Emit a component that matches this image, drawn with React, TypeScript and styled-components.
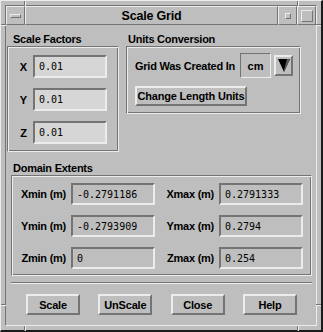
import React from "react";
import styled, { createGlobalStyle, css } from "styled-components";

const BG = "#bebebe";
const LIGHT = "#ececec";
const DARK = "#747474";
const FIELD = "#d6d6d6";

const GlobalStyle = createGlobalStyle`
  html, body {
    margin: 0;
    padding: 0;
    background: ${BG};
  }
  * {
    box-sizing: border-box;
  }
`;

const raised = css`
  border-style: solid;
  border-color: ${LIGHT} ${DARK} ${DARK} ${LIGHT};
`;

const sunken = css`
  border-style: solid;
  border-color: ${DARK} ${LIGHT} ${LIGHT} ${DARK};
`;

const etched = css`
  border: 1px solid;
  border-color: ${DARK} ${LIGHT} ${LIGHT} ${DARK};
  box-shadow: inset 1px 1px 0 ${LIGHT}, inset -1px -1px 0 ${DARK};
`;

const Window = styled.div`
  position: relative;
  width: 323px;
  height: 332px;
  background: ${BG};
  border-style: solid;
  border-width: 1px 2px 2px 1px;
  border-color: ${LIGHT} #1a1a1a #1a1a1a ${LIGHT};
  padding: 4px;
  font-family: "Liberation Sans", Arial, sans-serif;
  color: #000;
`;

const Inner = styled.div`
  display: flex;
  flex-direction: column;
  width: 100%;
  height: 100%;
  border: 1px solid;
  border-color: ${DARK} ${LIGHT} ${LIGHT} ${DARK};
`;

// resize-handle marks cut into the window frame
const Notch = styled.div<{ $x: number; $y: number; $w: number; $h: number }>`
  position: absolute;
  left: ${({ $x }) => $x}px;
  top: ${({ $y }) => $y}px;
  width: ${({ $w }) => $w}px;
  height: ${({ $h }) => $h}px;
  background: ${DARK};
  box-shadow: ${({ $w }) => ($w === 1 ? `1px 0 0 ${LIGHT}` : `0 1px 0 ${LIGHT}`)};
`;

const TitleBar = styled.div`
  display: flex;
  height: 19px;
  flex: none;
`;

const TitleButton = styled.div<{ $w: number }>`
  ${raised};
  border-width: 1px;
  width: ${({ $w }) => $w}px;
  flex: none;
  display: flex;
  align-items: center;
  justify-content: center;
`;

const Title = styled.div`
  ${raised};
  border-width: 1px;
  flex: 1;
  display: flex;
  align-items: center;
  justify-content: center;
  font-weight: bold;
  font-size: 12.5px;
  letter-spacing: -0.2px;
`;

const TitleGlyph = styled.div<{ $w: number; $h: number }>`
  ${raised};
  border-width: 1px;
  width: ${({ $w }) => $w}px;
  height: ${({ $h }) => $h}px;
`;

const Content = styled.div`
  flex: 1;
  display: flex;
  flex-direction: column;
  padding-top: 7px;
`;

const TopRow = styled.div`
  display: flex;
  align-items: flex-start;
  gap: 7px;
  padding-left: 1px;
`;

const Group = styled.div<{ $w: number; $ml?: number; $mt?: number }>`
  width: ${({ $w }) => $w}px;
  margin-left: ${({ $ml }) => $ml ?? 0}px;
  margin-top: ${({ $mt }) => $mt ?? 0}px;
  flex: none;
`;

const GroupLabel = styled.div<{ $pl: number }>`
  height: 14px;
  line-height: 14px;
  padding-left: ${({ $pl }) => $pl}px;
  font-weight: bold;
  font-size: 11px;
  letter-spacing: -0.25px;
  white-space: nowrap;
`;

const Frame = styled.div<{ $h: number }>`
  ${etched};
  height: ${({ $h }) => $h}px;
`;

const FactorList = styled.div`
  display: flex;
  flex-direction: column;
  gap: 10px;
  padding: 8px 0 0 6px;
`;

const FactorRow = styled.div`
  display: flex;
  align-items: center;
`;

const AxisLabel = styled.span`
  width: 19px;
  text-align: center;
  font-weight: bold;
  font-size: 11px;
`;

const Field = styled.div<{ $w: number; $h: number; $bg?: string }>`
  ${sunken};
  border-width: 2px;
  width: ${({ $w }) => $w}px;
  height: ${({ $h }) => $h}px;
  background: ${({ $bg }) => $bg ?? BG};
  padding-left: 4px;
  display: flex;
  align-items: center;
  font-family: "DejaVu Sans Mono", "Liberation Mono", monospace;
  font-size: 10px;
  white-space: nowrap;
`;

const UnitsBody = styled.div`
  display: flex;
  flex-direction: column;
  align-items: flex-start;
  gap: 8px;
  padding: 6px 0 0 8px;
`;

const UnitsRow = styled.div`
  display: flex;
  align-items: center;
`;

const UnitsText = styled.span`
  width: 105px;
  font-weight: bold;
  font-size: 11px;
  letter-spacing: -0.25px;
  white-space: nowrap;
`;

const UnitBox = styled.div`
  ${sunken};
  border-width: 1px;
  width: 31px;
  height: 25px;
  display: flex;
  align-items: center;
  justify-content: center;
  font-weight: bold;
  font-size: 11px;
`;

const ArrowButton = styled.div`
  ${raised};
  border-width: 2px;
  width: 19px;
  height: 21px;
  margin-left: 3px;
  display: flex;
  align-items: center;
  justify-content: center;
`;

const PushButton = styled.div<{ $w: number; $h: number }>`
  ${raised};
  border-width: 2px;
  width: ${({ $w }) => $w}px;
  height: ${({ $h }) => $h}px;
  display: flex;
  align-items: center;
  justify-content: center;
  font-weight: bold;
  font-size: 11px;
  letter-spacing: -0.2px;
  white-space: nowrap;
`;

const ExtentsGrid = styled.div`
  display: grid;
  grid-template-columns: 59px 84px 64px 84px;
  row-gap: 10px;
  align-items: center;
  padding-top: 7px;
`;

const ExtentLabel = styled.span`
  text-align: right;
  padding-right: 5px;
  font-weight: bold;
  font-size: 11px;
  letter-spacing: -0.25px;
  white-space: nowrap;
`;

const Separator = styled.div`
  margin: 6px 4px 0 5px;
  height: 2px;
  border-top: 1px solid ${DARK};
  border-bottom: 1px solid ${LIGHT};
`;

const ButtonRow = styled.div`
  display: flex;
  justify-content: space-between;
  margin-top: 10px;
  padding: 0 19px 0 20px;
`;

function DownArrow() {
  return (
    <svg width="12" height="13" viewBox="0 0 12 13">
      <polygon points="0,0 12,0 6,13" fill="#000" />
      <polygon points="9,0 12,0 6,13 6,11" fill="#5a5a5a" />
    </svg>
  );
}

const factors = [
  { axis: "X", value: "0.01" },
  { axis: "Y", value: "0.01" },
  { axis: "Z", value: "0.01" },
];

const extents = [
  ["Xmin (m)", "-0.2791186", "Xmax (m)", "0.2791333"],
  ["Ymin (m)", "-0.2793909", "Ymax (m)", "0.2794"],
  ["Zmin (m)", "0", "Zmax (m)", "0.254"],
];

const actions = ["Scale", "UnScale", "Close", "Help"];

export default function App() {
  return (
    <>
      <GlobalStyle />
      <Window>
        <Notch $x={23} $y={0} $w={1} $h={5} />
        <Notch $x={296} $y={0} $w={1} $h={5} />
        <Notch $x={23} $y={325} $w={1} $h={5} />
        <Notch $x={296} $y={325} $w={1} $h={5} />
        <Notch $x={0} $y={23} $w={5} $h={1} />
        <Notch $x={0} $y={303} $w={5} $h={1} />
        <Notch $x={315} $y={23} $w={5} $h={1} />
        <Notch $x={315} $y={303} $w={5} $h={1} />
        <Inner>
          <TitleBar>
            <TitleButton $w={19}>
              <TitleGlyph $w={11} $h={4} />
            </TitleButton>
            <Title>Scale Grid</Title>
            <TitleButton $w={19}>
              <TitleGlyph $w={6} $h={6} />
            </TitleButton>
            <TitleButton $w={19}>
              <TitleGlyph $w={12} $h={12} />
            </TitleButton>
          </TitleBar>
          <Content>
            <TopRow>
              <Group $w={112}>
                <GroupLabel $pl={6}>Scale Factors</GroupLabel>
                <Frame $h={106}>
                  <FactorList>
                    {factors.map((f) => (
                      <FactorRow key={f.axis}>
                        <AxisLabel>{f.axis}</AxisLabel>
                        <Field $w={74} $h={23} $bg={FIELD}>
                          {f.value}
                        </Field>
                      </FactorRow>
                    ))}
                  </FactorList>
                </Frame>
              </Group>
              <Group $w={175}>
                <GroupLabel $pl={2}>Units Conversion</GroupLabel>
                <Frame $h={68}>
                  <UnitsBody>
                    <UnitsRow>
                      <UnitsText>Grid Was Created In</UnitsText>
                      <UnitBox>cm</UnitBox>
                      <ArrowButton>
                        <DownArrow />
                      </ArrowButton>
                    </UnitsRow>
                    <PushButton $w={112} $h={20}>
                      Change Length Units
                    </PushButton>
                  </UnitsBody>
                </Frame>
              </Group>
            </TopRow>
            <Group $w={301} $ml={5} $mt={9}>
              <GroupLabel $pl={2}>Domain Extents</GroupLabel>
              <Frame $h={101}>
                <ExtentsGrid>
                  {extents.map(([a, av, b, bv]) => (
                    <React.Fragment key={a}>
                      <ExtentLabel>{a}</ExtentLabel>
                      <Field $w={84} $h={22}>
                        {av}
                      </Field>
                      <ExtentLabel>{b}</ExtentLabel>
                      <Field $w={84} $h={22}>
                        {bv}
                      </Field>
                    </React.Fragment>
                  ))}
                </ExtentsGrid>
              </Frame>
            </Group>
            <Separator />
            <ButtonRow>
              {actions.map((a) => (
                <PushButton key={a} $w={54} $h={21}>
                  {a}
                </PushButton>
              ))}
            </ButtonRow>
          </Content>
        </Inner>
      </Window>
    </>
  );
}
